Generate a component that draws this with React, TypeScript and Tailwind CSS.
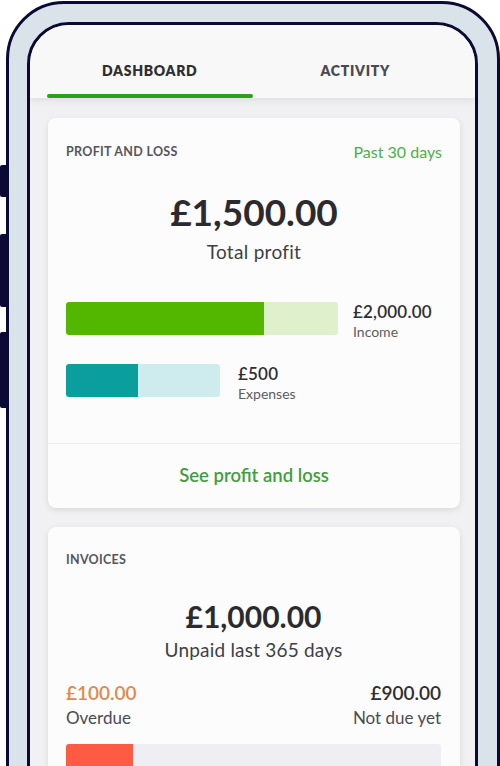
import React from 'react';

const navy = 'bg-[#0b0a35]';

export default function App() {
  return (
    <div className="w-[500px] h-[766px] overflow-hidden bg-white flex font-['Lato',sans-serif]">
      {/* side buttons */}
      <div className="w-[6px] shrink-0 flex flex-col">
        <div className={`mt-[165px] h-[32px] rounded-l-[2px] ${navy}`} />
        <div className={`mt-[37px] h-[73px] rounded-l-[2px] ${navy}`} />
        <div className={`mt-[25px] h-[76px] rounded-l-[2px] ${navy}`} />
      </div>

      {/* phone frame */}
      <div className="w-[494px] h-[820px] mt-[1px] shrink-0 border-[3px] border-[#0b0a35] rounded-t-[58px] bg-[#dae2ea] pt-[18px] pl-[18px] pr-[19px]">
        <div className="h-full border-[3px] border-[#0b0a35] rounded-t-[42px] bg-[#f1f1f3] overflow-hidden">
          {/* tabs */}
          <div className="relative z-10 bg-[#f8f8f8] shadow-[0_3px_6px_rgba(0,0,0,0.07)] flex px-[17px] pt-[38px]">
            <div className="w-[207px] flex flex-col items-center">
              <span className="text-[14px] leading-[16px] font-extrabold tracking-[0.7px] text-[#2e2e33]">DASHBOARD</span>
              <div className="mt-[15px] h-[4px] w-full rounded-full bg-[#2ca01c]" />
            </div>
            <div className="w-[207px] flex flex-col items-center">
              <span className="text-[14px] leading-[16px] font-extrabold tracking-[0.7px] text-[#4a4a50]">ACTIVITY</span>
              <div className="mt-[15px] h-[4px]" />
            </div>
          </div>

          <div className="pl-[18px] pr-[15px] pt-[20px] flex flex-col gap-[19px]">
            {/* profit and loss */}
            <div className="bg-[#fcfcfc] rounded-[8px] shadow-[0_2px_6px_rgba(0,0,0,0.1)]">
              <div className="px-[18px] pt-[24px] pb-[46px]">
                <div className="flex justify-between items-center h-[20px]">
                  <span className="text-[12.5px] font-bold tracking-[0.3px] text-[#55565c]">PROFIT AND LOSS</span>
                  <span className="text-[16px] text-[#4caf47]">Past 30 days</span>
                </div>
                <div className="mt-[30px] text-center text-[37px] leading-[40px] font-bold text-[#2b2b2f]">£1,500.00</div>
                <div className="mt-[8px] text-center text-[19px] leading-[24px] tracking-[0.3px] text-[#3e3f45]">Total profit</div>

                <div className="mt-[38px] h-[33px] flex items-start">
                  <div className="w-[272px] h-[33px] flex rounded-[3px] overflow-hidden">
                    <div className="w-[198px] bg-[#53b700]" />
                    <div className="flex-1 bg-[#dff0cd]" />
                  </div>
                  <div className="ml-[15px] flex flex-col">
                    <span className="text-[17px] leading-[20px] font-semibold text-[#2e2e33] tracking-[0.2px]">£2,000.00</span>
                    <span className="mt-[1px] text-[14px] leading-[18px] text-[#5b5c62]">Income</span>
                  </div>
                </div>

                <div className="mt-[29px] h-[33px] flex items-start">
                  <div className="w-[154px] h-[33px] flex rounded-[3px] overflow-hidden">
                    <div className="w-[72px] bg-[#0a9f9c]" />
                    <div className="flex-1 bg-[#ceecee]" />
                  </div>
                  <div className="ml-[18px] flex flex-col">
                    <span className="text-[17px] leading-[20px] font-semibold text-[#2e2e33] tracking-[0.2px]">£500</span>
                    <span className="mt-[1px] text-[14px] leading-[18px] text-[#5b5c62]">Expenses</span>
                  </div>
                </div>
              </div>
              <div className="border-t border-[#ececef] h-[65px] flex items-center justify-center">
                <span className="text-[18.5px] font-semibold text-[#459c40]">See profit and loss</span>
              </div>
            </div>

            {/* invoices */}
            <div className="bg-[#fcfcfc] rounded-[8px] shadow-[0_2px_6px_rgba(0,0,0,0.1)] px-[18px] pr-[19px] pt-[25px] pb-[30px]">
              <div className="text-[12.5px] leading-[16px] font-bold tracking-[0.3px] text-[#55565c]">INVOICES</div>
              <div className="mt-[31px] text-center text-[30px] leading-[34px] font-bold text-[#2b2b2f]">£1,000.00</div>
              <div className="mt-[5px] text-center text-[19px] leading-[24px] tracking-[0.2px] text-[#3e3f45]">Unpaid last 365 days</div>
              <div className="mt-[20px] flex justify-between">
                <div className="flex flex-col">
                  <span className="text-[19px] leading-[22px] font-semibold text-[#e0894c]">£100.00</span>
                  <span className="mt-[4px] text-[17px] leading-[20px] text-[#4a4b51]">Overdue</span>
                </div>
                <div className="flex flex-col items-end">
                  <span className="text-[19px] leading-[22px] font-semibold text-[#2e2e33]">£900.00</span>
                  <span className="mt-[4px] text-[17px] leading-[20px] text-[#4a4b51]">Not due yet</span>
                </div>
              </div>
              <div className="mt-[16px] h-[33px] flex rounded-[3px] overflow-hidden">
                <div className="w-[67px] bg-[#ff5a44]" />
                <div className="flex-1 bg-[#efeff3]" />
              </div>
            </div>
          </div>
        </div>
      </div>
    </div>
  );
}
